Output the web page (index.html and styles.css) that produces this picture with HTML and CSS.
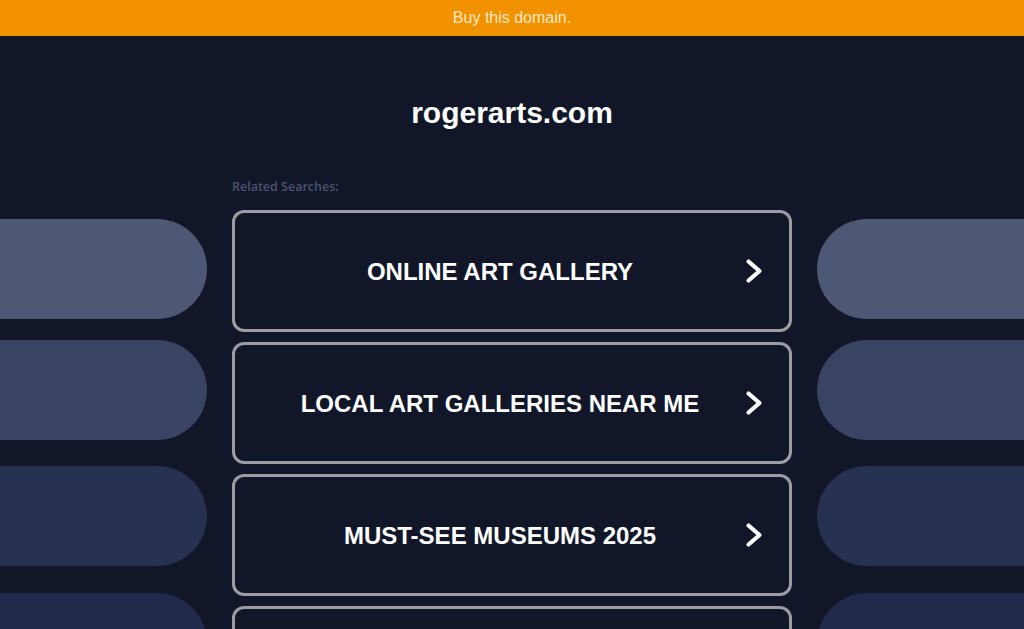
FILE: index.html
```html
<!DOCTYPE html>
<html>
<head>
    <meta charset="utf-8">
    <title>rogerarts.com</title>
    <link rel="stylesheet" href="styles.css">
</head>
<body>
<div class="topbar"><a href="#">Buy this domain.</a></div>

<h1 class="domain">rogerarts.com</h1>

<div class="content">
    <div class="side side-left">
        <div class="pill pill-a"></div>
        <div class="pill pill-b"></div>
        <div class="pill pill-c"></div>
        <div class="pill pill-d"></div>
    </div>

    <div class="links">
        <div class="label">Related Searches:</div>

        <a class="card" href="#">
            <span class="card-text">ONLINE ART GALLERY</span>
            <svg class="chevron" width="18" height="26" viewBox="0 0 18 26"><polyline points="3.5,3.5 14.5,13 3.5,22.5"/></svg>
        </a>
        <a class="card" href="#">
            <span class="card-text">LOCAL ART GALLERIES NEAR ME</span>
            <svg class="chevron" width="18" height="26" viewBox="0 0 18 26"><polyline points="3.5,3.5 14.5,13 3.5,22.5"/></svg>
        </a>
        <a class="card" href="#">
            <span class="card-text">MUST-SEE MUSEUMS 2025</span>
            <svg class="chevron" width="18" height="26" viewBox="0 0 18 26"><polyline points="3.5,3.5 14.5,13 3.5,22.5"/></svg>
        </a>
        <a class="card" href="#">
            <span class="card-text">ART CLASSES FOR ADULTS</span>
            <svg class="chevron" width="18" height="26" viewBox="0 0 18 26"><polyline points="3.5,3.5 14.5,13 3.5,22.5"/></svg>
        </a>
    </div>

    <div class="side side-right">
        <div class="pill pill-a"></div>
        <div class="pill pill-b"></div>
        <div class="pill pill-c"></div>
        <div class="pill pill-d"></div>
    </div>
</div>
</body>
</html>
```

FILE: styles.css
```css
html, body{
    margin: 0;
    padding: 0;
    overflow: hidden;
}

body{
    background-color: #111729;
    font-family: "Liberation Sans", Arial, sans-serif;
    color: #ffffff;
}

.topbar{
    height: 36px;
    line-height: 36px;
    text-align: center;
    background-color: #f39200;
    font-size: 16px;
}

.topbar a{
    color: #fde7c4;
    text-decoration: none;
}

.domain{
    margin: 0;
    padding: 61px 0 50px;
    font-size: 30px;
    line-height: 32px;
    font-weight: bold;
    text-align: center;
    color: #ffffff;
}

.content{
    display: grid;
    grid-template-columns: 207px 560px 207px;
    column-gap: 25px;
}

.side{
    display: flex;
    flex-direction: column;
}

.pill{
    height: 100px;
    flex-shrink: 0;
}

.side-left .pill{
    border-radius: 0 50px 50px 0;
}

.side-right .pill{
    border-radius: 50px 0 0 50px;
}

.pill-a{
    margin-top: 40px;
    background-color: #4e5774;
}

.pill-b{
    margin-top: 21px;
    background-color: #3a4462;
}

.pill-c{
    margin-top: 26px;
    background-color: #283150;
}

.pill-d{
    margin-top: 27px;
    background-color: #212a4a;
}

.label{
    font-family: "Open Sans", sans-serif;
    font-size: 12.5px;
    font-weight: 600;
    line-height: 16px;
    color: #4b5472;
    margin-bottom: 15px;
}

.card{
    display: flex;
    align-items: center;
    box-sizing: border-box;
    height: 122px;
    margin-bottom: 10px;
    padding: 2px 26px 0 20px;
    border: 3px solid #9c9da3;
    border-radius: 12px;
    color: #ffffff;
    text-decoration: none;
}

.card-text{
    flex: 1;
    text-align: center;
    font-size: 24px;
    font-weight: bold;
}

.chevron{
    flex-shrink: 0;
    margin-top: -2px;
}

.chevron polyline{
    fill: none;
    stroke: #ffffff;
    stroke-width: 4.2;
    stroke-linecap: round;
    stroke-linejoin: round;
}
```
